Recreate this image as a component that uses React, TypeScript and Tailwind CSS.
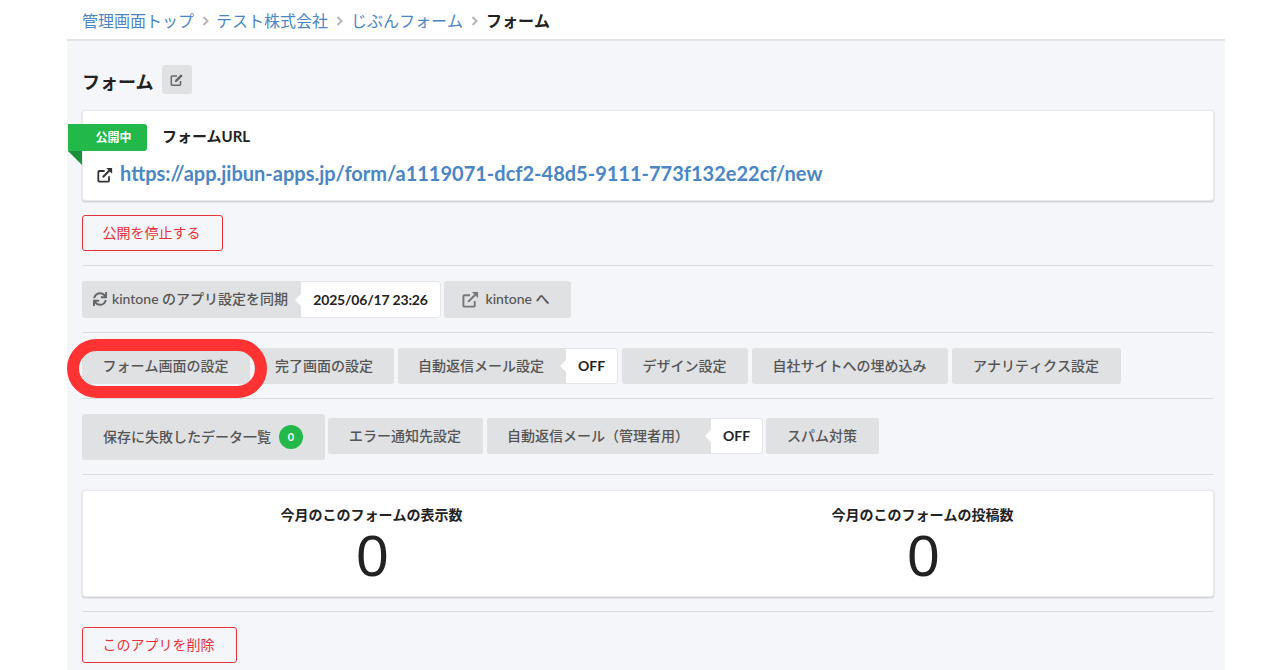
import React from "react";
import { FaSync } from "react-icons/fa";

const LinkIcon = ({ className }: { className: string }) => (
    <svg viewBox="0 0 18 18" className={className} fill="none" stroke="currentColor">
        <path d="M8.500 4.500H2.500a1 1 0 0 0-1 1v10a1 1 0 0 0 1 1h10a1 1 0 0 0 1-1v-5" strokeWidth="2" />
        <path d="M6.500 11.500 14 4" strokeWidth="2.200" />
        <path d="M10.500 1H17v6.500z" fill="currentColor" stroke="none" />
    </svg>
);

const EditIcon = ({ className }: { className: string }) => (
    <svg viewBox="0 0 16 16" className={className} fill="none" stroke="currentColor">
        <path d="M8 3.500H2.500a1 1 0 0 0-1 1v8.500a1 1 0 0 0 1 1H11a1 1 0 0 0 1-1V9" strokeWidth="1.700" />
        <path d="M5.500 10.500 6 8l6.500-6.500 2 2L8 10z" fill="currentColor" stroke="none" />
    </svg>
);

const Chevron = () => (
    <svg viewBox="0 0 7 10" className="mx-[8px] h-[10px] w-[7px] text-[#b5b5b5]" fill="none" stroke="currentColor" strokeWidth="2">
        <path d="M1.500 1 5.500 5l-4 4" />
    </svg>
);

const Tab = ({ children, tall, className = "" }: { children: React.ReactNode; tall?: boolean; className?: string }) => (
    <div className={`flex items-center justify-center rounded-[3px] bg-[#e0e1e3] pb-px text-sm font-medium text-[#555] [font-kerning:none] ${tall ? "h-[46px]" : "h-[36px]"} ${className}`}>
        {children}
    </div>
);

const TabWithOff = ({ children, width }: { children: React.ReactNode; width: string }) => (
    <div className="flex h-[36px] items-center rounded-[3px] border border-[#e4e5e8] bg-white">
        <div className={`-my-px -ml-px flex h-[36px] items-center rounded-l-[3px] bg-[#e0e1e3] pb-px pl-[20px] text-sm font-medium text-[#555] [font-kerning:none] ${width}`}>
            {children}
        </div>
        <div className="relative flex h-full w-[51px] items-center justify-center text-sm font-bold text-[#222]">
            <span className="absolute -left-[6px] top-1/2 h-0 w-0 -translate-y-1/2 border-y-[6px] border-r-[6px] border-y-transparent border-r-white" />
            OFF
        </div>
    </div>
);

const Divider = () => <hr className="mt-[14px] mb-[15px] border-0 border-t border-[#dcdde1]" />;

export default function App() {
    return (
        <div className="relative h-[670px] overflow-hidden bg-white font-['Lato','Noto_Sans_CJK_JP',sans-serif] text-[#222]">
            <div className="ml-[67px] w-[1158px]">
                {/* breadcrumb */}
                <div className="flex h-[41px] items-center border-b-2 border-[#e2e3e5] bg-white pt-[2px] pl-[15px] text-base [font-kerning:none]">
                    <a className="text-[#4a86c5]">管理画面トップ</a>
                    <Chevron />
                    <a className="-ml-px text-[#4a86c5]">テスト株式会社</a>
                    <Chevron />
                    <a className="text-[#4a86c5]">じぶんフォーム</a>
                    <Chevron />
                    <span className="font-bold">フォーム</span>
                </div>

                <div className="h-[629px] bg-[#f4f6fa] pl-[15px] pr-[11px]">
                    <div className="flex h-[69px] items-start">
                        <h1 className="mt-[27px] text-lg leading-[28px] font-bold">フォーム</h1>
                        <button className="mt-[24px] ml-[9px] flex h-[29px] w-[30px] items-center justify-center rounded-[3px] bg-[#e0e1e3] text-[#666]">
                            <EditIcon className="h-[14px] w-[14px]" />
                        </button>
                    </div>

                    {/* form url card */}
                    <div className="relative h-[91px] rounded-[3px] border border-[#e8e9ec] bg-white shadow-[0_1px_2px_rgba(0,0,0,0.2)]">
                        <div className="absolute -left-[15px] top-[13px] flex h-[27px] w-[79px] items-center justify-center rounded-r-[3px] bg-[#22b84a] pl-[12px] text-xs font-bold text-white">
                            公開中
                        </div>
                        <span className="absolute -left-[15px] top-[40px] h-0 w-0 border-t-[14px] border-l-[14px] border-t-[#1b8f3a] border-l-transparent" />
                        <div className="pt-[13px] pl-[79px] text-[15px] leading-[24px] font-bold">フォームURL</div>
                        <div className="mt-[9px] flex items-center pl-[14px]">
                            <LinkIcon className="mr-[7px] mt-[4px] h-[16px] w-[16px] text-[#333]" />
                            <a className="text-xl leading-[32px] font-bold text-[#4a86c5]">https://app.jibun-apps.jp/form/a1119071-dcf2-48d5-9111-773f132e22cf/new</a>
                        </div>
                    </div>

                    <button className="mt-[14px] block h-[36px] w-[141px] rounded-[3px] border border-[#e5333a] pr-[2px] text-sm text-[#e5333a] [font-kerning:none]">公開を停止する</button>
                    <Divider />

                    <div className="flex gap-[3px]">
                        <div className="flex h-[37px] items-center rounded-[3px] border border-[#e4e5e8] bg-white">
                            <div className="-my-px -ml-px flex h-[37px] w-[219px] items-center rounded-l-[3px] bg-[#e0e1e3] pb-px pl-[11px] text-sm font-medium text-[#555]">
                                <FaSync className="mr-[5px] text-[14px] text-[#666]" />
                                kintone のアプリ設定を同期
                            </div>
                            <div className="relative flex h-full w-[139px] items-center justify-center text-sm font-bold tracking-[-0.2px]">
                                <span className="absolute -left-[6px] top-1/2 h-0 w-0 -translate-y-1/2 border-y-[6px] border-r-[6px] border-y-transparent border-r-white" />
                                2025/06/17 23:26
                            </div>
                        </div>
                        <div className="flex h-[37px] w-[127px] items-center justify-center rounded-[3px] bg-[#e0e1e3] pr-[3px] pb-px text-sm font-medium text-[#555]">
                            <LinkIcon className="mr-[6px] h-[17px] w-[17px] text-[#777]" />
                            kintone へ
                        </div>
                    </div>
                    <Divider />

                    <div className="flex gap-[4px]">
                        <Tab className="w-[168px] pr-px">フォーム画面の設定</Tab>
                        <Tab className="w-[140px]">完了画面の設定</Tab>
                        <TabWithOff width="w-[168px]">自動返信メール設定</TabWithOff>
                        <Tab className="w-[126px] pr-px">デザイン設定</Tab>
                        <Tab className="w-[196px] pr-px">自社サイトへの埋め込み</Tab>
                        <Tab className="w-[169px] pr-px">アナリティクス設定</Tab>
                    </div>
                    <Divider />

                    <div className="flex items-start">
                        <Tab tall className="w-[243px] pr-px">
                            保存に失敗したデータ一覧
                            <span className="ml-[8px] flex h-[24px] w-[24px] items-center justify-center rounded-full bg-[#22b84a] text-[11px] font-bold text-white">0</span>
                        </Tab>
                        <Tab className="mt-[4px] ml-[3px] w-[155px] pr-px">エラー通知先設定</Tab>
                        <div className="mt-[4px] ml-[4px]">
                            <TabWithOff width="w-[224px]">自動返信メール（管理者用）</TabWithOff>
                        </div>
                        <Tab className="mt-[4px] ml-[3px] w-[113px] pr-px">スパム対策</Tab>
                    </div>
                    <Divider />

                    {/* monthly counts */}
                    <div className="grid h-[107px] grid-cols-2 rounded-[3px] border border-[#e8e9ec] bg-white px-[14px] pt-[13px] text-center shadow-[0_1px_2px_rgba(0,0,0,0.2)]">
                        <div>
                            <div className="pr-[2px] text-sm leading-[22px] font-bold [font-kerning:none]">今月のこのフォームの表示数</div>
                            <div className="font-['Liberation_Sans',sans-serif] text-[58px] leading-[60px] font-light">0</div>
                        </div>
                        <div>
                            <div className="pr-[2px] text-sm leading-[22px] font-bold [font-kerning:none]">今月のこのフォームの投稿数</div>
                            <div className="font-['Liberation_Sans',sans-serif] text-[58px] leading-[60px] font-light">0</div>
                        </div>
                    </div>
                    <Divider />

                    <button className="block h-[36px] w-[155px] rounded-[3px] border border-[#e5333a] pr-[2px] text-sm text-[#e5333a] [font-kerning:none]">このアプリを削除</button>
                </div>
            </div>

            {/* red annotation ring */}
            <div className="absolute top-[339px] left-[67px] h-[59px] w-[200px] rounded-[30px] border-[12px] border-[#ff3333]" />
        </div>
    );
}
